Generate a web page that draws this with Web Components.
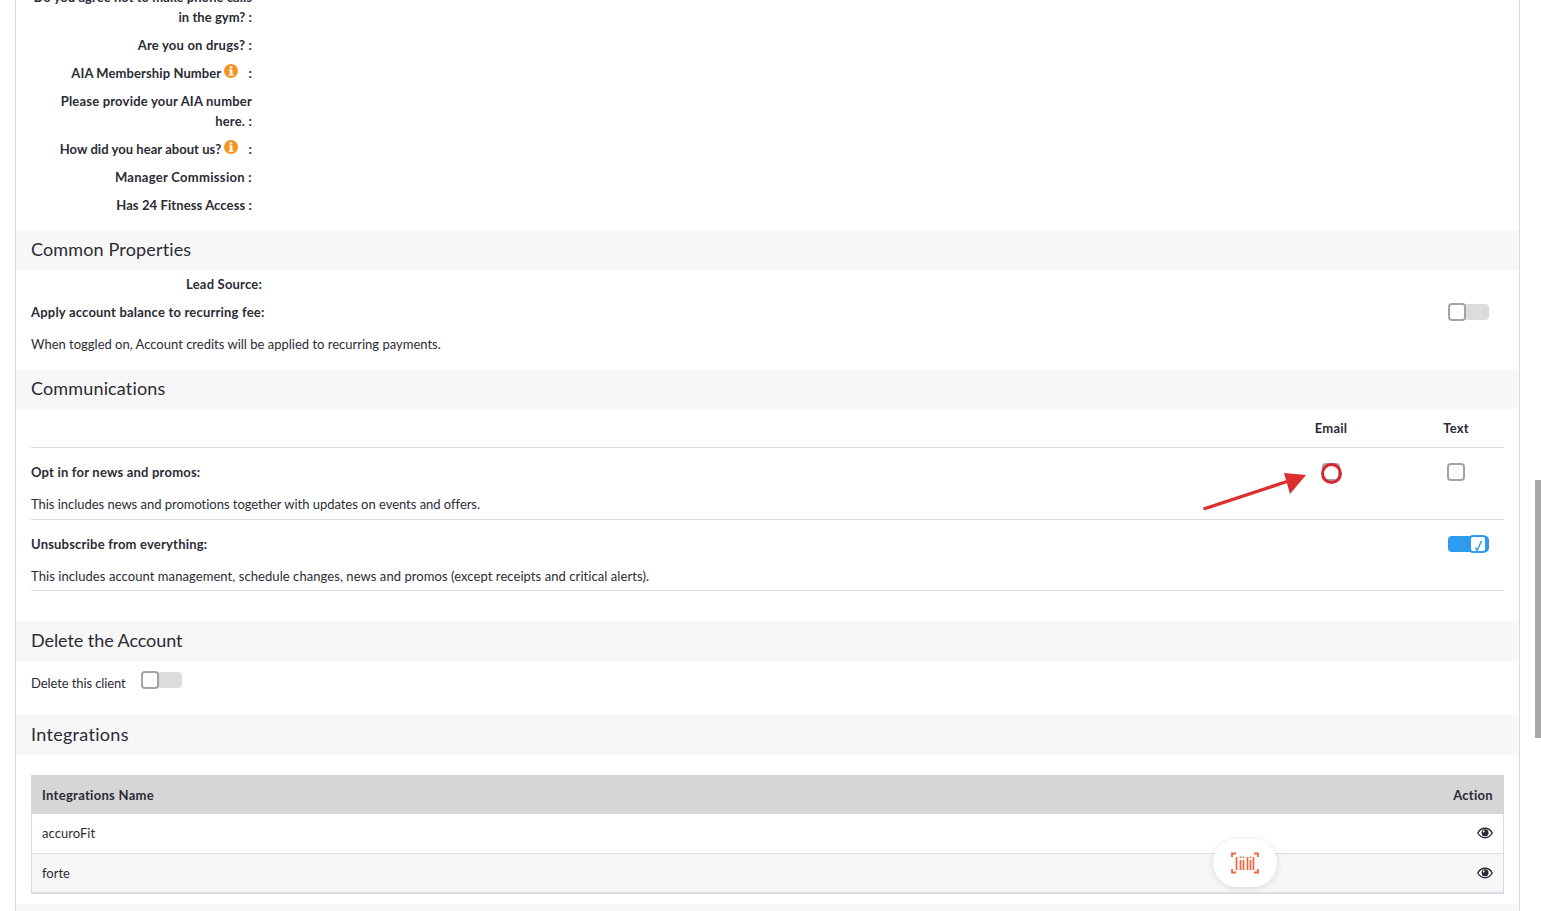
<!DOCTYPE html>
<html>
<head>
<meta charset="utf-8">
<title>Client</title>
<style>
  html, body { margin: 0; height: 911px; overflow: hidden; background: #fff; }
  body { font-family: "Lato", "Liberation Sans", sans-serif; color: #2b2b36; font-size: 13px; }
</style>
</head>
<body>
<client-page>
  <form-label style="margin-top:-17px;--ls:.05px" lines="2">Do you agree not to make phone calls<br>in the gym? :</form-label>
  <form-label>Are you on drugs? :</form-label>
  <form-label info style="--ls:.1px">AIA Membership Number</form-label>
  <form-label lines="2">Please provide your AIA number here. :</form-label>
  <form-label info style="--ls:.05px">How did you hear about us?</form-label>
  <form-label style="--ls:.3px">Manager Commission :</form-label>
  <form-label style="--ls:.1px">Has 24 Fitness Access :</form-label>

  <section-head style="margin-top:11px">Common Properties</section-head>
  <form-label wide>Lead Source:</form-label>
  <setting-row title="Apply account balance to recurring fee:" desc="When toggled on, Account credits will be applied to recurring payments." plain style="--desc-ls:0">
    <toggle-switch slot="control" style="margin-right:15px"></toggle-switch>
  </setting-row>

  <section-head>Communications</section-head>
  <comm-head></comm-head>
  <setting-row title="Opt in for news and promos:" desc="This includes news and promotions together with updates on events and offers." style="--desc-ls:-.03px">
    <opt-checks slot="control"></opt-checks>
  </setting-row>
  <setting-row last title="Unsubscribe from everything:" desc="This includes account management, schedule changes, news and promos (except receipts and critical alerts)." style="--desc-ls:.07px">
    <toggle-switch slot="control" on style="margin-right:15px"></toggle-switch>
  </setting-row>

  <section-head style="margin-top:30px;letter-spacing:-.07px">Delete the Account</section-head>
  <delete-row></delete-row>
  <section-head style="letter-spacing:.3px">Integrations</section-head>
  <integrations-table></integrations-table>
  <section-head style="margin-top:10px"></section-head>

  <page-arrow></page-arrow>
  <scan-button></scan-button>
</client-page>
<page-scrollbar></page-scrollbar>

<script>
const CHECK = `<svg viewBox="0 0 14 14" width="14" height="14" style="overflow:visible"><path d="M4.500 10.500 L6 13.500 L10.500 4" fill="none" stroke="#2f9bef" stroke-width="1.500"/></svg>`;
const INFO = `<svg viewBox="0 0 14 14" width="14" height="14"><circle cx="7" cy="7" r="7" fill="#f7931e"/><rect x="5.700" y="2.200" width="2.600" height="2.400" rx=".6" fill="#fff"/><path d="M5 5.600h3.400v4.700h1v1.400H4.800v-1.400h1V7H5z" fill="#fff"/></svg>`;
const EYE = `<svg viewBox="0 0 16 12" width="16" height="12"><path d="M.8 6C2.500 2.800 5 1.300 8 1.300S13.500 2.800 15.200 6C13.500 9.200 11 10.700 8 10.700S2.500 9.200.8 6z" fill="#fff" stroke="#2b2b36" stroke-width="1.400"/><circle cx="8" cy="5.700" r="3.500" fill="#2b2b36"/><circle cx="6.700" cy="4.400" r="1" fill="#fff"/></svg>`;

// Wrapper that stands in for the scrolled page content
class ClientPage extends HTMLElement {
  constructor() {
    super();
    this.attachShadow({ mode: "open" });
    this.shadowRoot.innerHTML = `
      <style>
        :host { display: block; box-sizing: border-box; position: relative; width: 1505px; height: 911px; margin-left: 15px; overflow: hidden; border-left: 1px solid #d9d9d9; border-right: 1px solid #d9d9d9; }
      </style>
      <slot></slot>`;
  }
}

class FormLabel extends HTMLElement {
  constructor() {
    super();
    this.attachShadow({ mode: "open" });
  }
  connectedCallback() {
    const lines = this.getAttribute("lines") || 1;
    const info = this.hasAttribute("info");
    const wide = this.hasAttribute("wide");
    this.shadowRoot.innerHTML = `
      <style>
        :host { display: block; box-sizing: border-box; height: ${lines == 2 ? 48 : 28}px; padding: 4px 0 4px 15px; }
        div { width: ${wide ? 231 : 221}px; text-align: right; font-weight: 700; font-size: 13px; line-height: 20px; letter-spacing: var(--ls, .2px); }
        svg { vertical-align: -1px; margin: 0 7px 1px 0; }
      </style>
      <div><slot></slot>${info ? ` ${INFO} :` : ""}</div>`;
  }
}

class SectionHead extends HTMLElement {
  constructor() {
    super();
    this.attachShadow({ mode: "open" });
    this.shadowRoot.innerHTML = `
      <style>
        :host { display: block; box-sizing: border-box; height: 40px; padding: 0 15px; background: #f7f7f7; font-size: 18px; line-height: 39px; letter-spacing: .15px; }
      </style>
      <slot></slot>`;
  }
}

class ToggleSwitch extends HTMLElement {
  constructor() {
    super();
    this.attachShadow({ mode: "open" });
  }
  connectedCallback() {
    const on = this.hasAttribute("on");
    this.shadowRoot.innerHTML = `
      <style>
        :host { display: flex; justify-content: ${on ? "flex-end" : "flex-start"}; align-items: center; width: 41px; height: 16px; border-radius: 4px; background: ${on ? "#2f9bef" : "#dcdcdc"}; }
        span { box-sizing: border-box; display: flex; width: 18px; height: 18px; margin-right: ${on ? 2 : 0}px; background: #fff; border: 2px solid ${on ? "#2f9bef" : "#a3a3a3"}; border-radius: 4px; }
        svg { display: ${on ? "block" : "none"}; }
      </style>
      <span>${CHECK}</span>`;
  }
}

class SettingRow extends HTMLElement {
  constructor() {
    super();
    this.attachShadow({ mode: "open" });
  }
  connectedCallback() {
    const plain = this.hasAttribute("plain");
    const short = plain || this.hasAttribute("last");
    this.shadowRoot.innerHTML = `
      <style>
        :host { display: block; padding: 0 15px; }
        .row { box-sizing: border-box; height: ${short ? 71 : 72}px; border-bottom: ${plain ? "none" : "1px solid #d9dbe6"}; padding-top: ${plain ? 4 : 14}px; }
        .top { display: flex; justify-content: space-between; align-items: center; height: 20px; }
        b { font-size: 13px; font-weight: 700; letter-spacing: .2px; }
        p { margin: 12px 0 0; font-size: 13px; line-height: 20px; letter-spacing: var(--desc-ls, 0); }
      </style>
      <div class="row">
        <div class="top"><b>${this.getAttribute("title")}</b><slot name="control"></slot></div>
        <p>${this.getAttribute("desc")}</p>
      </div>`;
  }
}

class CommHead extends HTMLElement {
  constructor() {
    super();
    this.attachShadow({ mode: "open" });
    this.shadowRoot.innerHTML = `
      <style>
        :host { display: block; padding: 0 15px; }
        div { box-sizing: border-box; display: flex; justify-content: flex-end; height: 39px; border-bottom: 1px solid #d9dbe6; font-size: 13px; font-weight: 700; line-height: 38px; letter-spacing: .2px; }
        span { width: 50px; text-align: center; }
        span:first-child { margin-right: 75px; }
        span:last-child { margin-right: 23px; }
      </style>
      <div><span>Email</span><span>Text</span></div>`;
  }
}

class OptChecks extends HTMLElement {
  constructor() {
    super();
    this.attachShadow({ mode: "open" });
    this.shadowRoot.innerHTML = `
      <style>
        :host { display: flex; gap: 107px; margin-right: 39px; }
        span { box-sizing: border-box; position: relative; width: 18px; height: 18px; border: 2px solid #a3a3a3; border-radius: 4px; background: #fff; }
        span:first-child { background: #f1f8fe; border-color: #8f8f8f; }
        i { position: absolute; left: -3px; top: -2px; width: 15px; height: 15px; border: 3px solid #d9272e; border-radius: 50%; }
      </style>
      <span><i></i></span><span></span>`;
  }
}

class DeleteRow extends HTMLElement {
  constructor() {
    super();
    this.attachShadow({ mode: "open" });
    this.shadowRoot.innerHTML = `
      <style>
        :host { display: flex; align-items: flex-start; box-sizing: border-box; height: 54px; padding: 11px 15px 0; gap: 15px; }
        span { width: 95px; font-size: 13px; line-height: 22px; white-space: nowrap; letter-spacing: -.1px; }
      </style>
      <span>Delete this client</span><toggle-switch></toggle-switch>`;
  }
}

class IntegrationsTable extends HTMLElement {
  constructor() {
    super();
    this.attachShadow({ mode: "open" });
    this.shadowRoot.innerHTML = `
      <style>
        :host { display: block; padding: 20px 15px 0; }
        .t { border: solid #d9dbe6; border-width: 0 1px 2px; font-size: 13px; }
        .r { display: flex; justify-content: space-between; align-items: center; box-sizing: border-box; height: 39px; padding: 0 10px; }
        .h { margin: 0 -1px; padding: 0 11px; background: #d6d6d6; font-weight: 700; letter-spacing: .3px; }
        .b { border-top: 1px solid #d9dbe6; background: #f6f6f6; }
        .c { margin-top: -1px; letter-spacing: .05px; }
        svg { display: block; margin-top: -1px; }
      </style>
      <div class="t">
        <div class="r h"><span>Integrations Name</span><span>Action</span></div>
        <div class="r"><span class="c">accuroFit</span>${EYE}</div>
        <div class="r b"><span>forte</span>${EYE}</div>
      </div>`;
  }
}

// Red annotation arrow drawn over the screenshot
class PageArrow extends HTMLElement {
  constructor() {
    super();
    this.attachShadow({ mode: "open" });
    this.shadowRoot.innerHTML = `
      <style>:host { position: absolute; left: 1186px; top: 470px; width: 106px; height: 42px; }</style>
      <svg width="106" height="42" viewBox="0 0 106 42"><path d="M1.500 39 L85 11.500" stroke="#dc2f2f" stroke-width="3.400" fill="none"/><path d="M104 5 L82 3 L88 24z" fill="#dc2f2f"/></svg>`;
  }
}

class ScanButton extends HTMLElement {
  constructor() {
    super();
    this.attachShadow({ mode: "open" });
    this.shadowRoot.innerHTML = `
      <style>
        :host { position: absolute; left: 1197px; top: 839px; display: flex; align-items: center; justify-content: center; width: 64px; height: 48px; border-radius: 24px; background: #fff; box-shadow: 0 1px 6px rgba(0,0,0,.13); }
      </style>
      <svg width="28" height="22" viewBox="0 0 28 22" fill="none" stroke="#f4623f">
        <path stroke-width="1.800" d="M1 5V1.500H5M23 1.500H27V5M1 17V20.500H5M23 20.500H27V17"/>
        <path stroke-width="1.700" d="M5.500 5V18M9.500 8V18M12.500 8V18M16.500 5V18M19.500 8V18M22.500 5V18"/>
        <path stroke-width="1.700" d="M9.500 4.500V6M12.500 4.500V6M19.500 4.500V6"/>
      </svg>`;
  }
}

class PageScrollbar extends HTMLElement {
  constructor() {
    super();
    this.attachShadow({ mode: "open" });
    this.shadowRoot.innerHTML = `
      <style>:host { position: fixed; left: 1535px; top: 480px; width: 6px; height: 258px; background: #a8a8a8; }</style>`;
  }
}

customElements.define("client-page", ClientPage);
customElements.define("form-label", FormLabel);
customElements.define("section-head", SectionHead);
customElements.define("toggle-switch", ToggleSwitch);
customElements.define("setting-row", SettingRow);
customElements.define("comm-head", CommHead);
customElements.define("opt-checks", OptChecks);
customElements.define("delete-row", DeleteRow);
customElements.define("integrations-table", IntegrationsTable);
customElements.define("page-arrow", PageArrow);
customElements.define("scan-button", ScanButton);
customElements.define("page-scrollbar", PageScrollbar);
</script>
</body>
</html>
